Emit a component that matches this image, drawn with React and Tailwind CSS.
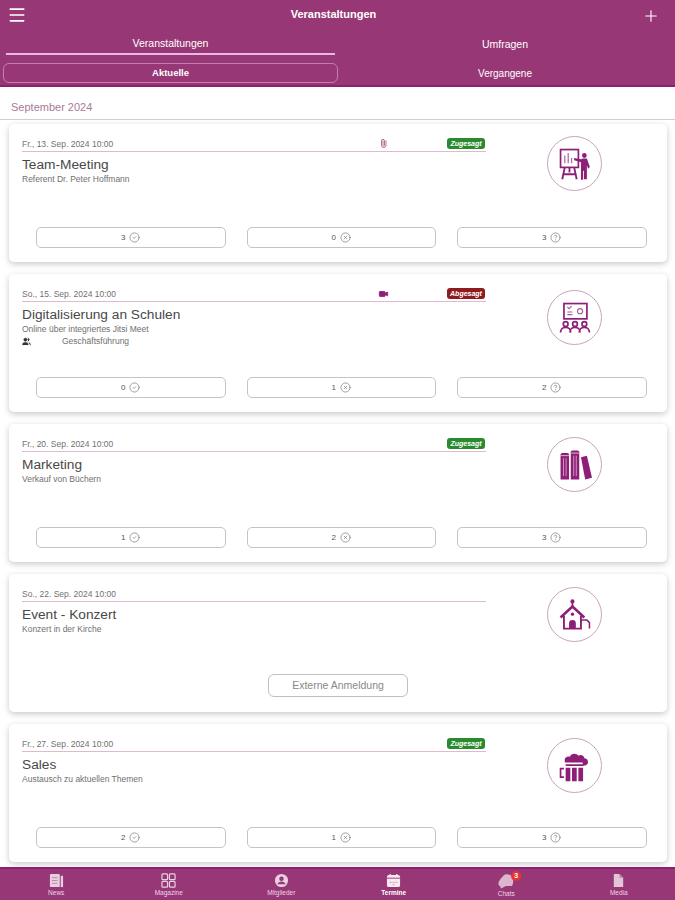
import React from 'react';
import { Menu, Plus, CircleCheck, CircleX, CircleHelp, Paperclip, Video, Users } from 'lucide-react';

const FONT = "font-['Liberation_Sans',Arial,sans-serif]";

// Event type pictograms
const Presenter = () => (
    <svg viewBox="0 0 40 40" className="w-[34px] h-[34px]" fill="none" stroke="#8e1f77" strokeWidth="1.8">
        <rect x="3" y="3" width="21" height="21" strokeWidth="2" />
        <path d="M8 19v-9M12 19v-12M16 19v-6" strokeWidth="1.5" stroke="#b36aa3" />
        <path d="M8 24l-3 14M19 24l3 14M13.500 24v6M6 32h15" strokeWidth="2.2" />
        <circle cx="31" cy="10" r="2.800" fill="#8e1f77" stroke="none" />
        <path d="M19 13l8 1.500 2-1h5l3.500 10-2 2-1.500-4v16.500h-3.500V28h-1v10.500H27V18l-8-2.500z" fill="#8e1f77" stroke="none" />
    </svg>
);

const Classroom = () => (
    <svg viewBox="0 0 40 40" className="w-[34px] h-[34px]" fill="none" stroke="#8e1f77" strokeWidth="1.8">
        <rect x="7" y="3" width="27" height="18" strokeWidth="2" />
        <path d="M11 7l2 2 3-3M11 13h6M11 16h6" strokeWidth="1.300" stroke="#a65a96" />
        <circle cx="26" cy="12" r="3" strokeWidth="1.300" stroke="#a65a96" />
        <circle cx="9" cy="27" r="2.800" strokeWidth="2" />
        <circle cx="20" cy="27" r="2.800" strokeWidth="2" />
        <circle cx="31" cy="27" r="2.800" strokeWidth="2" />
        <path d="M3 37c0-4 3-6 6-6s6 2 6 6M14 37c0-4 3-6 6-6s6 2 6 6M25 37c0-4 3-6 6-6s6 2 6 6" strokeWidth="2" />
    </svg>
);

const Books = () => (
    <svg viewBox="0 0 40 40" className="w-[34px] h-[34px]" fill="#8e1f77">
        <path d="M3 8a2 2 0 0 1 2-2h6a2 2 0 0 1 2 2v29H3z" />
        <path d="M15 5a2 2 0 0 1 2-2h6a2 2 0 0 1 2 2v32H15z" />
        <path d="M27 11l7-2 6 26-8 2z" />
        <path d="M6.500 12v21M9.500 12v21M18.500 9v24M21.500 9v24" stroke="#d9a9cd" strokeWidth="1" />
        <path d="M3 9h10M15 6h10" stroke="#e8cfe2" strokeWidth="1" />
    </svg>
);

const Church = () => (
    <svg viewBox="0 0 40 40" className="w-[34px] h-[34px]" fill="none" stroke="#8e1f77" strokeWidth="2.200">
        <circle cx="17" cy="4" r="2.400" fill="#8e1f77" stroke="none" />
        <path d="M17 6v5" />
        <path d="M3 23l14-13 14 13" strokeWidth="3" />
        <path d="M7 21v15h20V21" />
        <circle cx="17" cy="19" r="2" fill="#8e1f77" stroke="none" />
        <path d="M13 36v-6a4 4 0 0 1 8 0v6z" fill="#8e1f77" stroke="none" />
        <path d="M27 26h7l3 3v7" strokeWidth="1.800" />
    </svg>
);

const Beer = () => (
    <svg viewBox="0 0 40 40" className="w-[34px] h-[34px]" fill="#8e1f77">
        <path d="M8 14c-1-4 3-6 6-5 1-4 8-5 10-1 3-2 7 0 7 3 3 0 5 3 4 6-1 2-4 3-6 2v-3H8z" />
        <path d="M9 18h21v2H9zM9 22h5.500v16H9zM16.500 22h5.500v16h-5.500zM24 22h5.500v16H24z" />
        <path d="M7 23H3v10h4" fill="none" stroke="#8e1f77" strokeWidth="2" />
    </svg>
);

// Bottom navigation pictograms
const NewsIcon = () => (
    <svg viewBox="0 0 16 16" className="w-[15px] h-[15px]">
        <rect x="1" y="1" width="10.500" height="14" rx="1" fill="#e9cfe2" />
        <rect x="12.500" y="3" width="2.500" height="12" fill="#e9cfe2" />
        <path d="M3 5h6M3 8h6M3 11h6" stroke="#b98aa8" strokeWidth="1" />
    </svg>
);

const MagazineIcon = () => (
    <svg viewBox="0 0 16 16" className="w-[15px] h-[15px]" fill="none" stroke="#e9cfe2" strokeWidth="1.300">
        <rect x="1" y="1" width="6" height="6" rx="1" />
        <rect x="9" y="1" width="6" height="6" rx="1" />
        <rect x="1" y="9" width="6" height="6" rx="1" />
        <rect x="9" y="9" width="6" height="6" rx="1" />
    </svg>
);

const MemberIcon = () => (
    <svg viewBox="0 0 16 16" className="w-[15px] h-[15px]">
        <circle cx="8" cy="8" r="7" fill="#e9cfe2" />
        <circle cx="8" cy="6.200" r="2.400" fill="#983775" />
        <path d="M3.600 12c.8-2 2.400-3 4.400-3s3.600 1 4.400 3z" fill="#983775" />
    </svg>
);

const CalendarIcon = () => (
    <svg viewBox="0 0 16 16" className="w-[15px] h-[15px]">
        <rect x="1" y="2" width="14" height="13" rx="2" fill="#f6e9f2" />
        <path d="M4.500 1v2.500M11.500 1v2.500" stroke="#f6e9f2" strokeWidth="1.400" />
        <path d="M1 5.500h14" stroke="#983775" strokeWidth="1" />
        <path d="M4 10h2M7 10h2M10 10h2M7 12.500h2" stroke="#c79ab8" strokeWidth="1" />
    </svg>
);

const ChatIcon = () => (
    <svg viewBox="0 0 16 16" className="w-[16px] h-[16px]" fill="#dcb6d0">
        <path d="M7 1.500c3-1 6 .5 7.500 3 1 2.500 1 6-.5 8.500H2.500C.5 13-.5 10 1.500 7.500 3 5.500 5 2.500 7 1.500z" />
        <path d="M2 13h6l-5 2.500z" />
    </svg>
);

const FileIcon = () => (
    <svg viewBox="0 0 16 16" className="w-[15px] h-[15px]">
        <path d="M3 1h6l4 4v10H3z" fill="#e3c5da" />
        <path d="M9 1v4h4" fill="#b98aa8" />
    </svg>
);

const NAV = [
    { label: 'News', icon: NewsIcon },
    { label: 'Magazine', icon: MagazineIcon },
    { label: 'Mitglieder', icon: MemberIcon },
    { label: 'Termine', icon: CalendarIcon, active: true },
    { label: 'Chats', icon: ChatIcon, badge: 3 },
    { label: 'Media', icon: FileIcon },
];

const EVENTS = [
    { date: 'Fr., 13. Sep. 2024 10:00', title: 'Team-Meeting', sub: 'Referent Dr. Peter Hoffmann', status: 'Zugesagt', attach: 'clip', icon: Presenter, iconTop: 'pt-[12px]', counts: [3, 0, 3] },
    { date: 'So., 15. Sep. 2024 10:00', title: 'Digitalisierung an Schulen', sub: 'Online über integriertes Jitsi Meet', group: 'Geschäftsführung', status: 'Abgesagt', attach: 'video', icon: Classroom, iconTop: 'pt-[16px]', counts: [0, 1, 2] },
    { date: 'Fr., 20. Sep. 2024 10:00', title: 'Marketing', sub: 'Verkauf von Büchern', status: 'Zugesagt', icon: Books, iconTop: 'pt-[13px]', counts: [1, 2, 3] },
    { date: 'So., 22. Sep. 2024 10:00', title: 'Event - Konzert', sub: 'Konzert in der Kirche', icon: Church, iconTop: 'pt-[13px]', external: true },
    { date: 'Fr., 27. Sep. 2024 10:00', title: 'Sales', sub: 'Austausch zu aktuellen Themen', status: 'Zugesagt', icon: Beer, iconTop: 'pt-[14px]', counts: [2, 1, 3] },
];

const COUNT_ICONS = [CircleCheck, CircleX, CircleHelp];

const EventCard = ({ event }) => {
    const Icon = event.icon;
    return (
        <div className="h-[138px] shrink-0 flex flex-col bg-white rounded-[5px] shadow-[0_2px_6px_rgba(0,0,0,0.22)]">
            <div className="flex h-[84px]">
                <div className="w-[464px] ml-[13px] pt-[14px]">
                    <div className="h-[14px] relative flex items-center border-b border-[#e0b8d0] text-[8.500px] leading-none text-[#707070]">
                        <span>{event.date}</span>
                        {event.attach === 'clip' && <Paperclip className="absolute left-[357px] top-[1px] w-[9px] h-[9px] text-[#b0709c] rotate-[-45deg]" strokeWidth={2.5} />}
                        {event.attach === 'video' && <Video className="absolute left-[356px] top-[1px] w-[11px] h-[10px] text-[#8e1f77] fill-[#8e1f77]" />}
                        {event.status && (
                            <span className={`absolute right-[1px] -top-[0.5px] w-[38px] h-[11px] flex items-center justify-center rounded-[3px] text-[7px] font-bold italic text-white ${event.status === 'Zugesagt' ? 'bg-[#2a8a2e]' : 'bg-[#8f1c1c]'}`}>
                                {event.status}
                            </span>
                        )}
                    </div>
                    <h3 className="mt-[4px] text-[13.700px] leading-[17px] text-[#484848]">{event.title}</h3>
                    <p className="mt-[1px] text-[8.500px] leading-[10px] text-[#707070]">{event.sub}</p>
                    {event.group && (
                        <div className="flex items-center mt-[2px] text-[8.500px] leading-[10px] text-[#707070]">
                            <Users className="w-[9px] h-[9px] text-[#333] fill-[#333]" />
                            <span className="ml-[31px]">{event.group}</span>
                        </div>
                    )}
                </div>
                <div className={`flex-1 flex pl-[61px] ${event.iconTop}`}>
                    <div className="w-[55px] h-[55px] rounded-full border border-[#c9a3bb] flex items-center justify-center">
                        <Icon />
                    </div>
                </div>
            </div>
            {event.external ? (
                <div className="mt-auto mb-[15px] flex justify-center">
                    <button className="w-[140px] h-[23px] rounded-[6px] border border-[#c0c0c0] text-[10.500px] text-[#888]">Externe Anmeldung</button>
                </div>
            ) : (
                <div className="mt-auto mb-[14px] ml-[27px] flex gap-[21px]">
                    {event.counts.map((count, i) => {
                        const CountIcon = COUNT_ICONS[i];
                        return (
                            <div key={i} className="w-[189.500px] h-[21px] rounded-[5px] border border-[#c4c4c4] flex items-center justify-center gap-[4px] text-[8px] text-[#555]">
                                {count}
                                <CountIcon className="w-[11px] h-[11px] text-[#777]" strokeWidth={1.5} />
                            </div>
                        );
                    })}
                </div>
            )}
        </div>
    );
};

export default function App() {
    return (
        <div className={`${FONT} w-[675px] h-[900px] flex flex-col overflow-hidden bg-white`}>
            <header className="h-[87px] shrink-0 bg-[#983775] border-b-[2px] border-[#8e1f6e] text-white">
                <div className="h-[30px] grid grid-cols-3 items-center pl-[7px] pr-[15px]">
                    <Menu className="w-[20px] h-[20px]" strokeWidth={2} />
                    <span className="text-[11px] font-bold -mt-[1px] text-center">Veranstaltungen</span>
                    <Plus className="w-[18px] h-[18px] mt-[1px] justify-self-end" strokeWidth={1.5} />
                </div>
                <div className="h-[25px] flex text-[10.500px] pl-[6px]">
                    <div className="w-[329px] pt-[5px] border-b-[2px] border-[#eab8dc] flex items-center justify-center">Veranstaltungen</div>
                    <div className="flex-1 pt-[5px] flex items-center justify-center">Umfragen</div>
                </div>
                <div className="flex pl-[3px] mt-[8px] text-[9.500px] font-bold">
                    <div className="w-[335px] h-[20px] rounded-[6px] border border-[#c27fab] flex items-center justify-center">Aktuelle</div>
                    <div className="flex-1 flex items-center justify-center pr-[3px] font-normal text-[10px]">Vergangene</div>
                </div>
            </header>

            <div className="h-[33px] shrink-0 flex items-center pl-[11px] pt-[9px] border-b border-[#d8c8d2] text-[11px] text-[#a97a96]">
                September 2024
            </div>

            <main className="flex-1 flex flex-col gap-[12px] px-[9px] pt-[4px] pr-[8px] overflow-hidden">
                {EVENTS.map((event) => <EventCard key={event.title} event={event} />)}
            </main>

            <nav className="h-[33px] shrink-0 grid grid-cols-6 bg-[#983775] border-t-[2px] border-[#8e1f6e]">
                {NAV.map((item) => {
                    const NavIcon = item.icon;
                    return (
                        <div key={item.label} className={`flex flex-col items-center pt-[4px] text-[6.500px] leading-[8px] ${item.active ? 'font-bold text-white' : 'text-[#eed6e7]'}`}>
                            <div className="relative">
                                <NavIcon />
                                {item.badge && (
                                    <span className="absolute -top-[2px] -right-[7px] w-[10px] h-[10px] rounded-full bg-[#e53535] text-white text-[7px] font-bold flex items-center justify-center">{item.badge}</span>
                                )}
                            </div>
                            <span className="mt-[1px]">{item.label}</span>
                        </div>
                    );
                })}
            </nav>
        </div>
    );
}
